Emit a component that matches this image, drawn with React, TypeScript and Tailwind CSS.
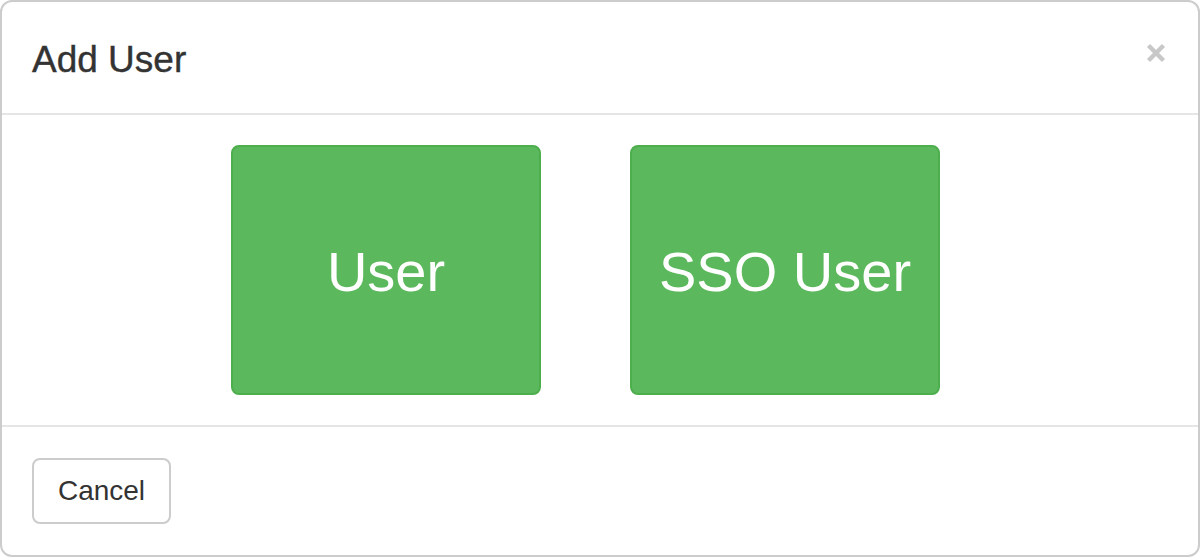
import React from 'react'

function CloseIcon() {
  return (
    <svg width="20" height="20" viewBox="0 0 20 20" aria-hidden="true">
      <path d="M2.5 2.5 L17.5 17.5 M17.5 2.5 L2.5 17.5" stroke="#c8c8c8" strokeWidth="4.4" strokeLinecap="butt" fill="none" />
    </svg>
  )
}

function ChoiceButton({ label }: { label: string }) {
  return (
    <button className="flex h-[250px] w-[310px] items-center justify-center rounded-[8px] border-2 border-[#4cae4c] bg-[#5cb85c] pt-[4px] text-[56px] leading-none text-white">
      {label}
    </button>
  )
}

export default function App() {
  return (
    <div className="h-[558px] w-[1200px] bg-white font-['Liberation_Sans',Helvetica,Arial,sans-serif] text-[#333333]">
      <div className="flex h-[557px] w-[1200px] flex-col rounded-[12px] border-2 border-[#cccccc] bg-white">
        <div className="flex items-start justify-between border-b-2 border-[#e5e5e5] pb-[28px] pl-[30px] pr-[32px] pt-[33px]">
          <h4 className="text-[37px] leading-[50px] [-webkit-text-stroke:0.4px_#333333]">Add User</h4>
          <button className="mt-[8px]" aria-label="Close">
            <CloseIcon />
          </button>
        </div>

        <div className="flex gap-[89px] py-[30px] pl-[229px]">
          <ChoiceButton label="User" />
          <ChoiceButton label="SSO User" />
        </div>

        <div className="border-t-2 border-[#e5e5e5] px-[30px] pt-[31px]">
          <button className="flex h-[66px] w-[139px] items-center justify-center rounded-[8px] border-2 border-[#cccccc] bg-white text-[28px] text-[#333333]">
            Cancel
          </button>
        </div>
      </div>
    </div>
  )
}
